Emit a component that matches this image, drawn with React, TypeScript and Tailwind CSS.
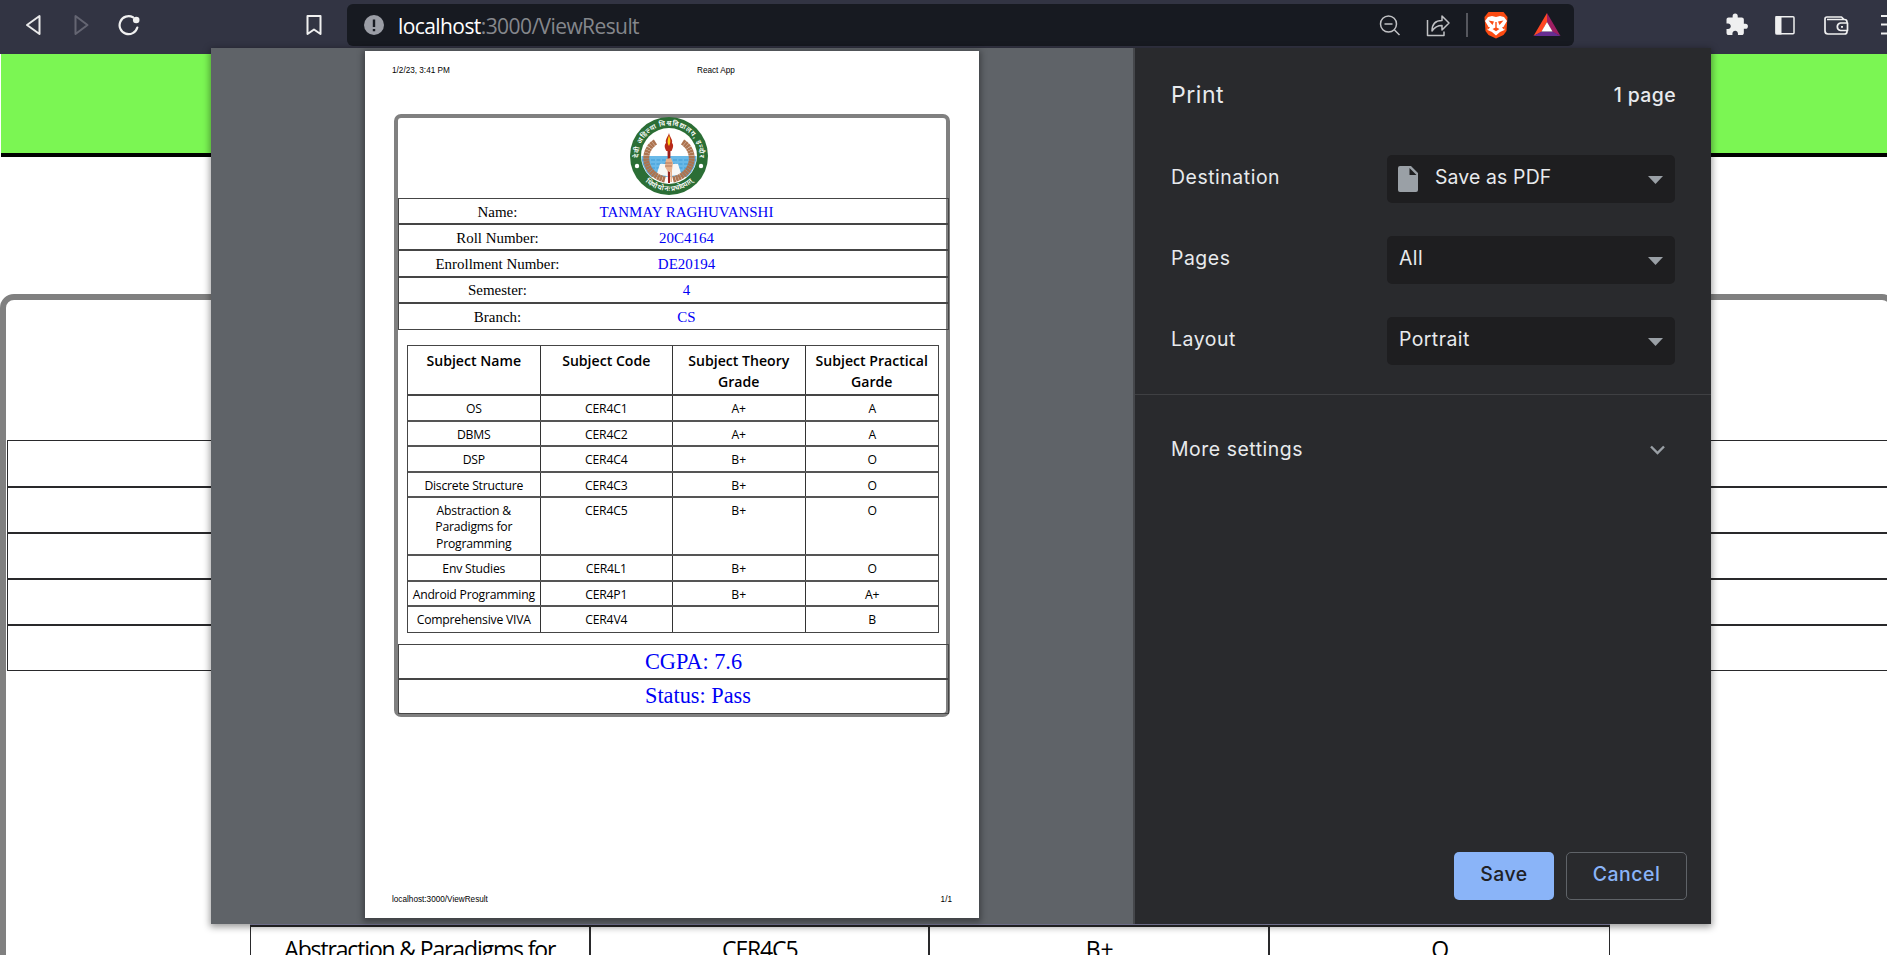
import React from "react";

const ui = "font-['Inter','Liberation_Sans',sans-serif]";
const seg = "font-['Open_Sans','Noto_Sans',sans-serif]";

const info = [
  { label: "Name:", value: "TANMAY RAGHUVANSHI" },
  { label: "Roll Number:", value: "20C4164" },
  { label: "Enrollment Number:", value: "DE20194" },
  { label: "Semester:", value: "4" },
  { label: "Branch:", value: "CS" },
];

const subjects = [
  { name: ["OS"], code: "CER4C1", theory: "A+", practical: "A", h: "h-[26px]" },
  { name: ["DBMS"], code: "CER4C2", theory: "A+", practical: "A", h: "h-[25px]" },
  { name: ["DSP"], code: "CER4C4", theory: "B+", practical: "O", h: "h-[26px]" },
  { name: ["Discrete Structure"], code: "CER4C3", theory: "B+", practical: "O", h: "h-[25px]" },
  { name: ["Abstraction &", "Paradigms for", "Programming"], code: "CER4C5", theory: "B+", practical: "O", h: "h-[58px]" },
  { name: ["Env Studies"], code: "CER4L1", theory: "B+", practical: "O", h: "h-[26px]" },
  { name: ["Android Programming"], code: "CER4P1", theory: "B+", practical: "A+", h: "h-[25px]" },
  { name: ["Comprehensive VIVA"], code: "CER4V4", theory: "", practical: "B", h: "h-[25px]" },
];

const headings = [["Subject Name"], ["Subject Code"], ["Subject Theory", "Grade"], ["Subject Practical", "Garde"]];

function Toolbar() {
  return (
    <header className="relative h-[54px] shrink-0 bg-[#323443]">
      <div className="flex h-[50px] w-[1910px] items-center">
        <svg className="ml-[24px] h-[22px] w-[20px]" viewBox="0 0 20 22" fill="none" stroke="#e9e9ea" strokeWidth="2" strokeLinejoin="round">
          <path d="M15.500 2v18L3 11z" />
        </svg>
        <svg className="ml-[29px] h-[22px] w-[20px]" viewBox="0 0 20 22" fill="none" stroke="#646572" strokeWidth="2" strokeLinejoin="round">
          <path d="M2.500 2v18L14.500 11z" />
        </svg>
        <svg className="ml-[25px] h-[24px] w-[24px]" viewBox="0 0 24 24" fill="none" stroke="#f0f0f0" strokeWidth="2.2" strokeLinecap="round">
          <path d="M19.300 14.500A9 9 0 1 1 15 4.300" />
          <circle cx="18.200" cy="7" r="3.300" fill="#f0f0f0" stroke="none" />
        </svg>
        <svg className="ml-[163px] h-[22px] w-[18px]" viewBox="0 0 18 22" fill="none" stroke="#f0f0f0" strokeWidth="2" strokeLinejoin="round">
          <path d="M2.500 2h13v18L9 15.500l-6.500 4.500z" />
        </svg>
        <div className="ml-[24px] flex h-[42px] w-[1227px] items-center rounded-[6px] bg-[#171a21]">
          <svg className="ml-[17px] h-[20px] w-[20px]" viewBox="0 0 20 20">
            <circle cx="10" cy="10" r="10" fill="#9b9ea6" />
            <path d="M8.800 4.500h2.400v7.500H8.800zM8.800 14h2.400v2.200H8.800z" fill="#171a21" />
          </svg>
          <div className={`ml-[14px] pt-px text-[21px] leading-[40px] tracking-[-0.580px] text-[#85878c] ${seg}`}>
            <span className="text-white">localhost</span>:3000/ViewResult
          </div>
        </div>
      </div>
      <svg className="absolute left-[1370px] top-0 h-[50px] w-[517px]" viewBox="1370 0 517 50" fill="none">
        <g stroke="#c0c1c4" strokeWidth="1.500">
          <circle cx="1388.500" cy="24" r="8" />
          <path d="M1384.500 24h8M1394.500 30l5 5" />
          <path d="M1427.500 20v15.500h16.500v-4M1432 31c0-7 4-10.500 10-10.500v-4.500l7 7-7 7v-4.500c-4 0-7 1-10 5.500z" strokeLinejoin="round" />
        </g>
        <path d="M1467 13v24" stroke="#55575e" strokeWidth="2" />
        <path d="M1488.500 12h15l4 5-1 14-3 4-7.500 3.500-7.500-3.500-3-4-1-14z" fill="#fb4b12" />
        <path d="M1488 17l4-1 4 1 4-1 4 1 3 4-3 5 .5 4-4.500 2-4 3.500-4-3.500-4.500-2 .5-4-3-5z" fill="#fff" />
        <path d="M1488.500 20.500l5.500 1-1.500 3.500zM1503.500 20.500l-5.500 1 1.500 3.500zM1492.500 29l3.500-1.800 3.500 1.800-3.500 2.200zM1495.300 22h1.400v5.500h-1.400zM1487 26l3 1.500-2 2zM1505 26l-3 1.500 2 2z" fill="#fb4b12" />
        <path d="M1547 13l-13.500 23 8-4 5.500-10z" fill="#ff4724" />
        <path d="M1547 13l13.500 23-8-4-5.500-10z" fill="#9e1f63" />
        <path d="M1533.500 36h27l-8-4.500h-11z" fill="#662d91" />
        <path d="M1547 22l5.500 9.500h-11z" fill="#fff" />
        <path transform="translate(1726 13.500) scale(1.020)" d="M19 10h-1.500V6c0-1.100-.9-2-2-2h-4V2.500a2.500 2.500 0 0 0-5 0V4h-4c-1.100 0-2 .9-2 2v3.800H2c1.500 0 2.700 1.200 2.700 2.700S3.500 15.200 2 15.200H.5V19c0 1.100.9 2 2 2h3.800v-1.500c0-1.500 1.200-2.700 2.700-2.700s2.700 1.200 2.700 2.700V21h3.800c1.100 0 2-.9 2-2v-4H19a2.500 2.500 0 0 0 0-5z" fill="#efeff0" />
        <rect x="1776" y="16.700" width="18" height="17" rx="1" stroke="#efeff0" strokeWidth="1.500" />
        <path d="M1775.500 16h6v18.500h-6z" fill="#efeff0" />
        <g stroke="#efeff0" strokeWidth="1.700" strokeLinejoin="round">
          <path d="M1847 23v-1a2.500 2.500 0 0 0-2.500-2.500H1827M1847 30.500v1a2.500 2.500 0 0 1-2.500 2.500H1828a3 3 0 0 1-3-3V19a2 2 0 0 1 2-2h14.500l2.500 2.500" />
          <path d="M1847.500 23h-7a3.800 3.800 0 0 0 0 7.500h7zM1841 26.800h2" />
        </g>
        <path d="M1881 16h6M1881 24.500h6M1881 33.500h6" stroke="#efeff0" strokeWidth="2" />
      </svg>
    </header>
  );
}

function Emblem() {
  return (
    <svg className="h-[78px] w-[78px]" viewBox="0 0 78 78">
      <defs>
        <path id="arcTop" d="M9.500 46.700A30.500 30.500 0 1 1 68.500 46.700" />
        <path id="arcBottom" d="M9 57A35 35 0 0 0 69 57" />
        <clipPath id="disc"><circle cx="39" cy="39" r="27.500" /></clipPath>
      </defs>
      <circle cx="39" cy="39" r="39" fill="#2b6e35" />
      <circle cx="39" cy="39" r="28" fill="#fff" />
      <g clipPath="url(#disc)">
        <path d="M10 39h58v21H10z" fill="#69b9e8" />
        <path d="M10 43h58M10 47h58M10 51h58M10 55h58" stroke="#3f9bd6" strokeWidth="1" strokeDasharray="4 1.500" />
        <path d="M30 47q5-1 9 2 4-3 9-2l4 12q-8-2-13 1-5-3-13-1z" fill="#f7f7f5" />
      </g>
      <g fill="none" stroke="#ad7450" strokeWidth="6" strokeDasharray="2.500 .3">
        <path d="M25.500 25C11 34 13 57 35 62.500" />
        <path d="M52.500 25C67 34 65 57 43 62.500" />
      </g>
      <path d="M37.500 32h3l-.5 34h-2z" fill="#991f1c" />
      <path d="M39 16c1 5 4 6 3 10 2 2 1 5-.5 8h-5c-2-3-2.500-6-.5-8-1-4 2-6 3-10z" fill="#b82a19" />
      <path d="M39 18c1 4 2.500 6 0 11-2.500-4-1-7 0-11z" fill="#ffd21c" />
      <path d="M36 42l5-1 2 5-1 7v12h-1.500V55h-2v-1h-1l-2.500-4z" fill="#e7b18b" />
      <path d="M35 46h7M35 49h7" stroke="#9b6048" strokeWidth=".7" />
      <circle cx="7" cy="49" r="2.200" fill="#fff" />
      <circle cx="71" cy="49" r="2.200" fill="#fff" />
      <g fill="#fff" fontSize="7" fontWeight="600" fontFamily="'Noto Sans Devanagari','Noto Sans',sans-serif" textAnchor="middle">
        <text><textPath href="#arcTop" startOffset="50%" textLength="99">देवी अहिल्या विश्वविद्यालय, इन्दौर</textPath></text>
        <text><textPath href="#arcBottom" startOffset="50%" textLength="52">धियो यो नः प्रचोदयात्</textPath></text>
      </g>
    </svg>
  );
}

function PrintedPage() {
  return (
    <div className="flex h-[867px] w-[614px] flex-col bg-white shadow-[0_2px_6px_2px_rgba(0,0,0,0.35)]">
      <div className="flex h-[63px] pt-[14px] font-['Liberation_Sans',sans-serif] text-[8.200px] leading-[12px] text-black">
        <span className="w-[305px] pl-[27px]">1/2/23, 3:41 PM</span>
        <span className="pl-[27px]">React App</span>
      </div>
      <div className="ml-[29px] h-[603px] w-[556px] rounded-[7px] border-[4px] border-[#808080]">
        <div className="-mt-[1px] flex h-[81px] justify-center pr-[7px]"><Emblem /></div>
        <div className="w-[551px] border-x border-t border-[#454545] font-['Liberation_Serif',serif] text-[14.950px]">
          {info.map((r) => (
            <div key={r.label} className="flex h-[26.200px] items-center border-b-2 border-[#454545] pt-[1.500px] last:border-b">
              <span className="w-[197px] text-center text-black">{r.label}</span>
              <span className="w-[181px] text-center text-[#0000f5]">{r.value}</span>
            </div>
          ))}
        </div>
        <div className={`ml-[9px] mt-[15px] w-[532px] border border-[#454545] text-black ${seg}`}>
          <div className="grid h-[50px] grid-cols-4 divide-x divide-[#333] border-b-2 border-[#454545] text-center text-[14.100px] font-semibold leading-[21px]">
            {headings.map((h) => (
              <div key={h[0]} className="pt-[4px]">{h.map((l) => <div key={l} className="whitespace-nowrap">{l}</div>)}</div>
            ))}
          </div>
          {subjects.map((s) => (
            <div key={s.code} className={`grid grid-cols-4 divide-x divide-[#333] border-b-2 border-[#555] text-center text-[12.200px] leading-[16.500px] last:border-b-0 ${s.h}`}>
              <div className="whitespace-nowrap pt-[5px] tracking-[-0.220px]">{s.name.map((l) => <div key={l}>{l}</div>)}</div>
              <div className="pt-[5px] tracking-[-0.200px]">{s.code}</div>
              <div className="pt-[5px]">{s.theory}</div>
              <div className="pl-px pt-[5px]">{s.practical}</div>
            </div>
          ))}
        </div>
        <div className="mt-[11px] w-[551px] border border-[#454545] font-['Liberation_Serif',serif] text-[22.300px] text-[#0000f5]">
          <div className="h-[35px] border-b-2 border-[#454545] pl-[246px] leading-[33px]">CGPA: 7.6</div>
          <div className="h-[33px] pl-[246px] leading-[31px]">Status: Pass</div>
        </div>
      </div>
      <div className="mt-auto flex h-[24px] justify-between px-[27px] font-['Liberation_Sans',sans-serif] text-[8.200px] leading-[12px] text-black">
        <span>localhost:3000/ViewResult</span>
        <span>1/1</span>
      </div>
    </div>
  );
}

function Setting({ label, value, file }: { label: string; value: string; file?: boolean }) {
  return (
    <div className="flex h-[48px] items-center justify-between">
      <span className="pb-[2px]">{label}</span>
      <div className="flex h-[48px] w-[288px] items-center rounded-[5px] bg-[#1e1e20] pl-[12px] pr-[12px]">
        {file && (
          <svg className="-ml-[1px] mr-[17px] h-[26px] w-[20px]" viewBox="0 0 20 26" fill="#9aa0a6">
            <path fillRule="evenodd" d="M2 0h11l7 7v17a2 2 0 0 1-2 2H2a2 2 0 0 1-2-2V2a2 2 0 0 1 2-2zm9.500 2v7h7z" />
          </svg>
        )}
        <span className={file ? "grow pb-[2px] tracking-[0.150px]" : "grow pb-[2px] tracking-[0.450px]"}>{value}</span>
        <svg className="mt-[2px] h-[8px] w-[15px]" viewBox="0 0 15 8" fill="#9aa0a6"><path d="M0 0h15L7.500 8z" /></svg>
      </div>
    </div>
  );
}

function PrintDialog() {
  return (
    <div role="dialog" className="absolute left-[211px] top-[48px] flex h-[876px] w-[1500px] shadow-[0_2px_7px_1px_rgba(0,0,0,0.4)]">
      <div className="w-[924px] border-r-2 border-[#45474b] bg-[#5f6368] pl-[154px] pt-[3px]">
        <PrintedPage />
      </div>
      <aside className={`flex w-[576px] flex-col bg-[#292a2d] text-[19.400px] tracking-[0.550px] text-[#e8eaed] ${ui}`}>
        <div className="flex h-[95px] items-center justify-between pl-[36px] pr-[36px]">
          <h1 className="text-[23px]">Print</h1>
          <span className="-mr-[1px] font-medium tracking-[0.400px]">1 page</span>
        </div>
        <div className="flex h-[252px] flex-col gap-[33px] border-b border-[#3f4043] pl-[36px] pr-[36px] pt-[12px]">
          <Setting label="Destination" value="Save as PDF" file />
          <Setting label="Pages" value="All" />
          <Setting label="Layout" value="Portrait" />
        </div>
        <div className="flex h-[109px] items-center justify-between pl-[36px] pr-[46px]">
          <span>More settings</span>
          <svg className="h-[10px] w-[15px]" viewBox="0 0 15 10" fill="none" stroke="#9aa0a6" strokeWidth="2.400"><path d="M1 1.500l6.500 6.500L14 1.500" /></svg>
        </div>
        <div className="mt-auto flex justify-end gap-[12px] pb-[24px] pr-[24px] font-medium">
          <button className="h-[48px] w-[100px] rounded-[5px] bg-[#8ab4f8] pb-[2px] text-[#202124]">Save</button>
          <button className="h-[48px] w-[121px] rounded-[5px] border border-[#5f6368] pb-[2px] text-[#8ab4f8]">Cancel</button>
        </div>
      </aside>
    </div>
  );
}

export default function App() {
  return (
    <div className="relative flex h-[955px] w-[1887px] flex-col overflow-hidden bg-white">
      <Toolbar />
      <div className="ml-[1px] h-[103px] shrink-0 border-b-4 border-black bg-[#7bf653]" />
      <div className="mt-[137px] h-[900px] w-[1896px] shrink-0 rounded-[14px] border-[6px] border-[#808080]">
        <div className="ml-[1px] mt-[140px] h-[231px] w-[1884px] border border-[#29292b]">
          <div className="h-[47px] border-b-2 border-[#29292b]" />
          <div className="h-[46px] border-b-2 border-[#29292b]" />
          <div className="h-[46px] border-b-2 border-[#29292b]" />
          <div className="h-[46px] border-b-2 border-[#29292b]" />
        </div>
        <div className="ml-[244px] mt-[253px] w-[1360px] border-t border-[#9c9cc4]">
          <div className={`grid h-[120px] grid-cols-4 divide-x-2 divide-[#29292b] border-x border-t-2 border-[#29292b] text-center text-[23px] leading-[32px] text-black ${seg}`}>
            <div className="whitespace-nowrap pt-[6px] tracking-[-1.150px]">Abstraction &amp; Paradigms for</div>
            <div className="pl-[1px] pt-[6px] tracking-[-1.150px]">CER4C5</div>
            <div className="pl-[2px] pt-[6px]">B+</div>
            <div className="pl-[2px] pt-[6px]">O</div>
          </div>
        </div>
      </div>
      <PrintDialog />
    </div>
  );
}
